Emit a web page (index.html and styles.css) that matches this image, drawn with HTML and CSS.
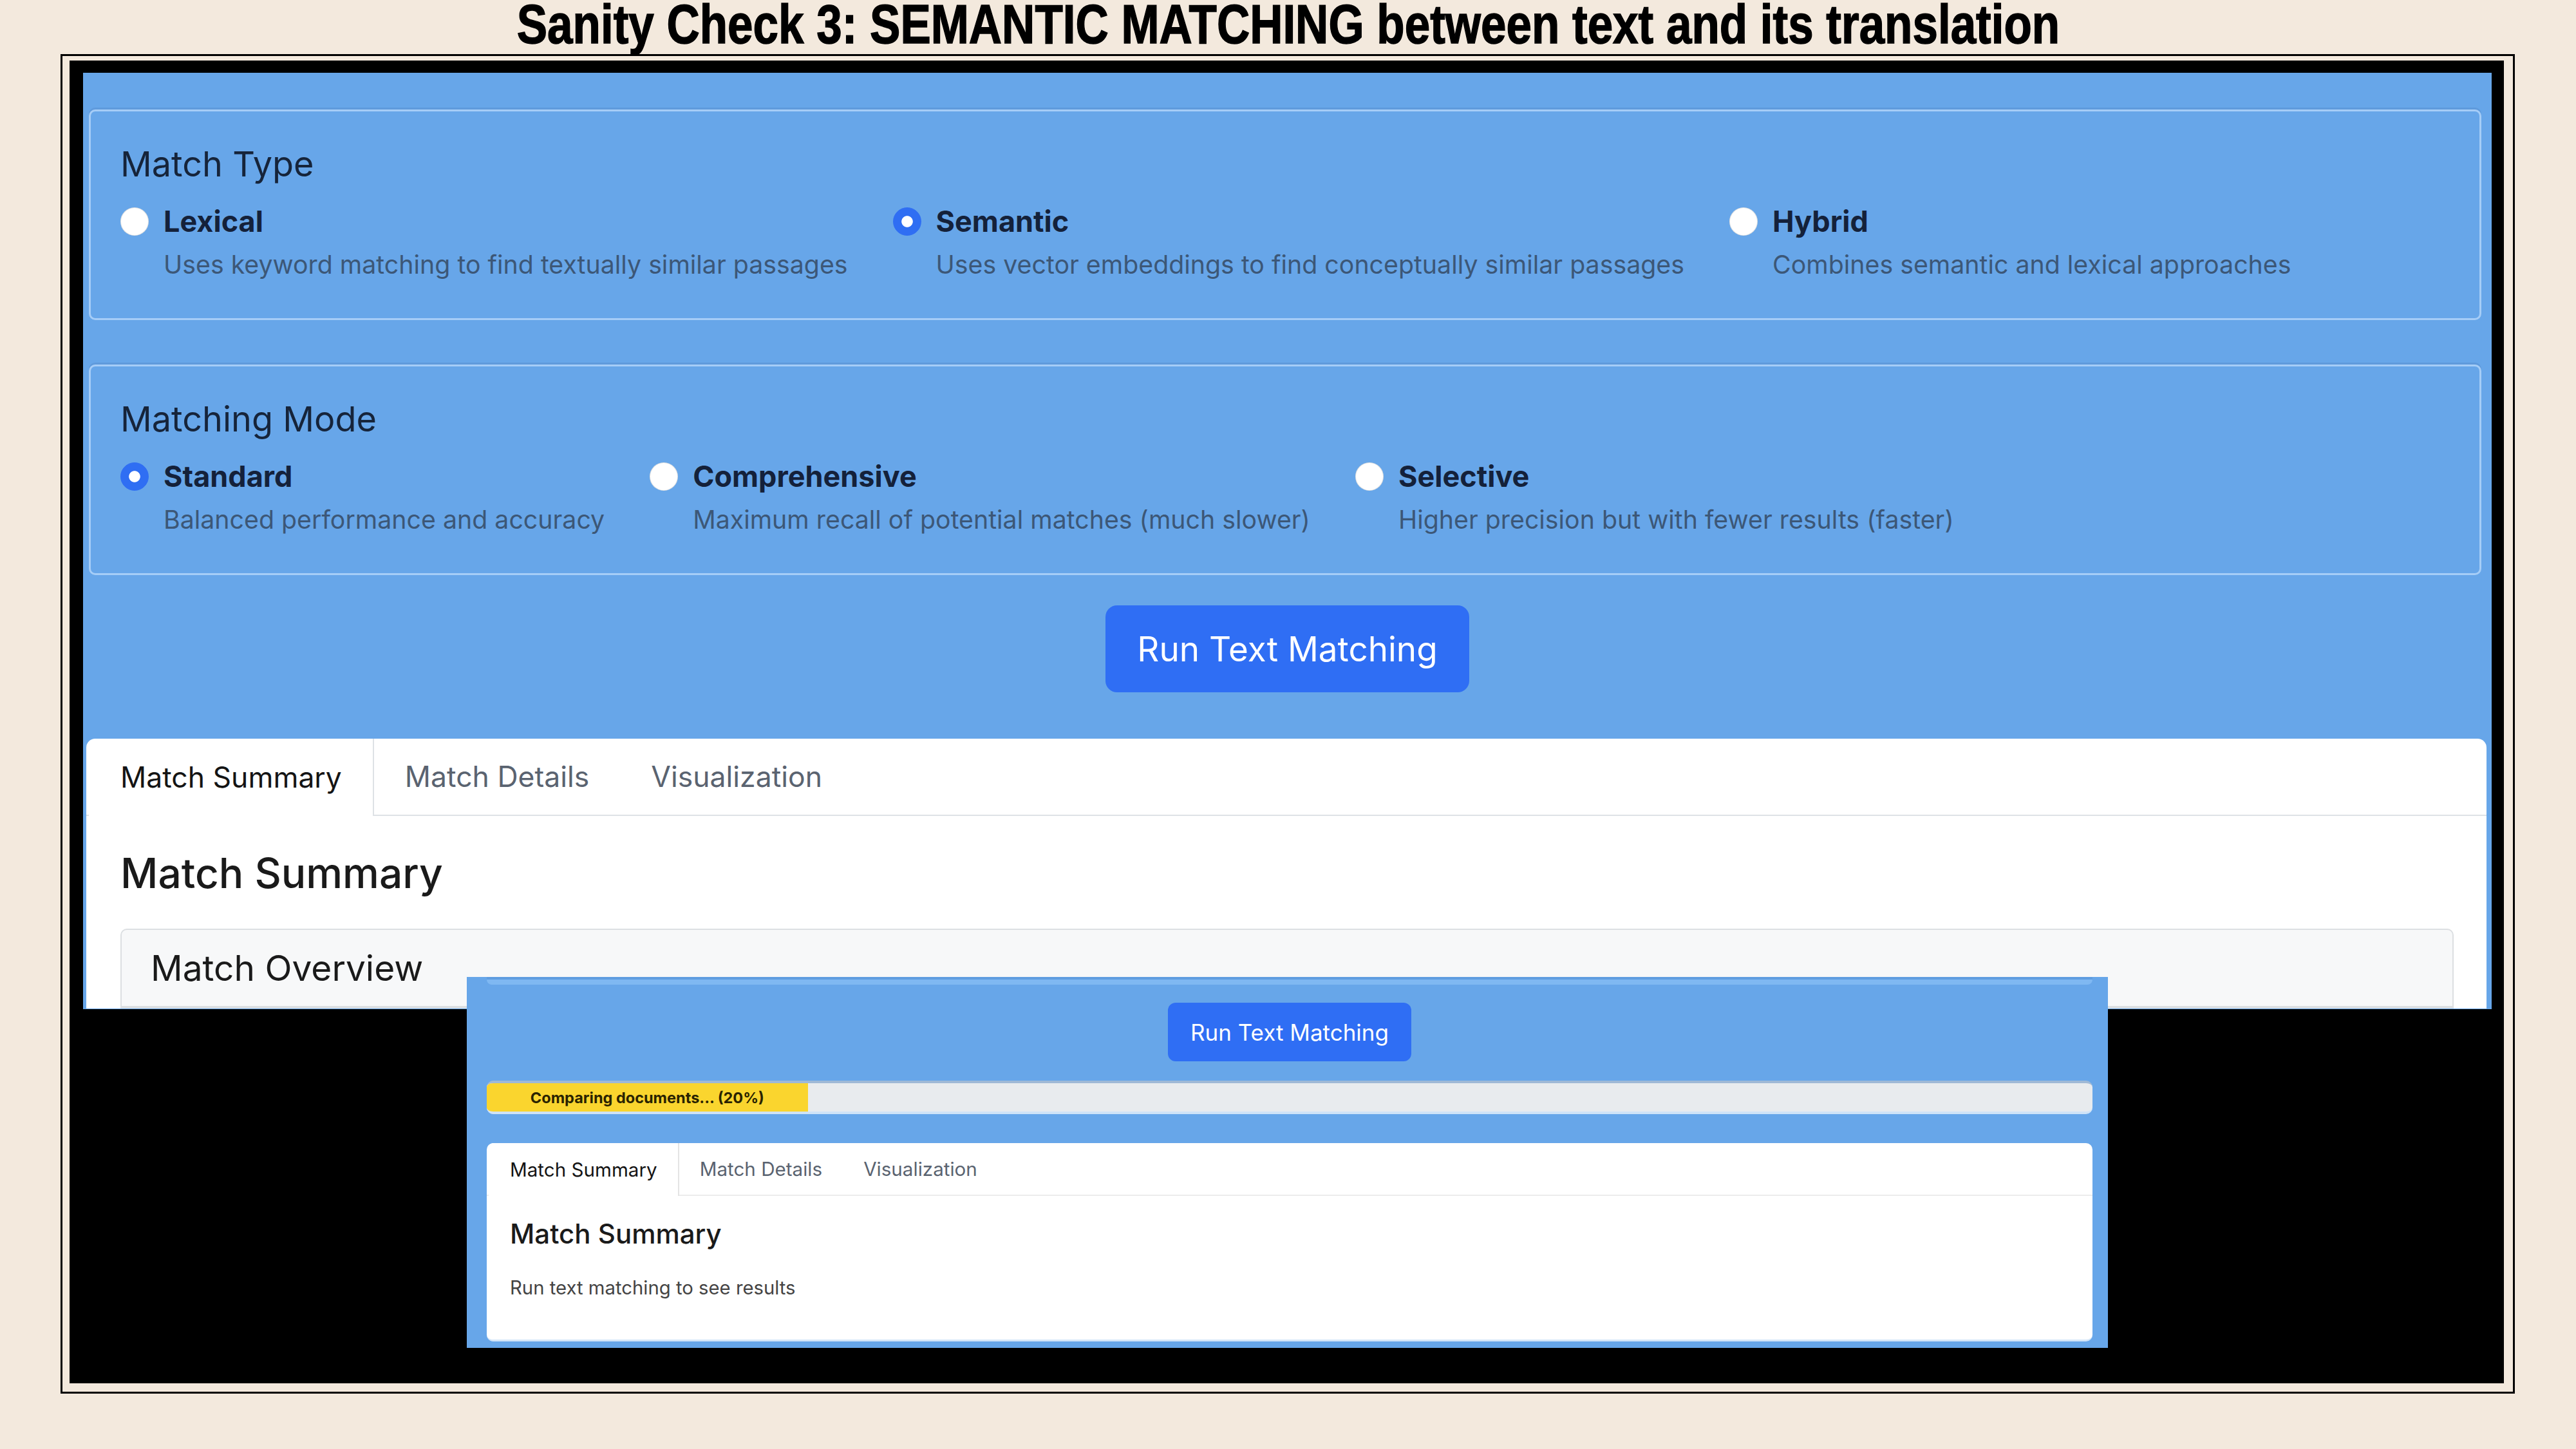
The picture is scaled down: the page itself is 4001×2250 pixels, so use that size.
FILE: index.html
```html
<!DOCTYPE html>
<html lang="en">
<head>
<meta charset="utf-8">
<title>Sanity Check 3</title>
<link rel="stylesheet" href="styles.css">
</head>
<body>
<header class="slide-title"><h1>Sanity Check 3: SEMANTIC MATCHING between text and its translation</h1></header>
<div class="frame">
  <div class="stage">
    <section class="shot">
      <div class="card">
        <h3 class="card-title">Match Type</h3>
        <div class="options">
          <div class="option"><span class="radio"></span><span class="opt-label">Lexical</span><span class="opt-desc">Uses keyword matching to find textually similar passages</span></div>
          <div class="option"><span class="radio checked"></span><span class="opt-label">Semantic</span><span class="opt-desc">Uses vector embeddings to find conceptually similar passages</span></div>
          <div class="option"><span class="radio"></span><span class="opt-label">Hybrid</span><span class="opt-desc">Combines semantic and lexical approaches</span></div>
        </div>
      </div>
      <div class="card">
        <h3 class="card-title">Matching Mode</h3>
        <div class="options">
          <div class="option"><span class="radio checked"></span><span class="opt-label">Standard</span><span class="opt-desc">Balanced performance and accuracy</span></div>
          <div class="option"><span class="radio"></span><span class="opt-label">Comprehensive</span><span class="opt-desc">Maximum recall of potential matches (much slower)</span></div>
          <div class="option"><span class="radio"></span><span class="opt-label">Selective</span><span class="opt-desc">Higher precision but with fewer results (faster)</span></div>
        </div>
      </div>
      <div class="btn-row"><button class="run-btn">Run Text Matching</button></div>
      <div class="panel">
        <nav class="tabs">
          <span class="tab active">Match Summary</span>
          <span class="tab">Match Details</span>
          <span class="tab">Visualization</span>
        </nav>
        <div class="panel-body">
          <h2 class="summary-title">Match Summary</h2>
          <div class="overview"><div class="overview-head">Match Overview</div></div>
        </div>
      </div>
    </section>

    <section class="shot-small">
      <div class="strip"></div>
      <div class="btn-row"><button class="run-btn sm">Run Text Matching</button></div>
      <div class="progress"><div class="progress-fill" style="width:20%">Comparing documents... (20%)</div></div>
      <div class="panel sm">
        <nav class="tabs sm">
          <span class="tab active">Match Summary</span>
          <span class="tab">Match Details</span>
          <span class="tab">Visualization</span>
        </nav>
        <div class="panel-body sm">
          <h2 class="summary-title sm">Match Summary</h2>
          <p class="result-note">Run text matching to see results</p>
        </div>
      </div>
    </section>
  </div>
</div>
</body>
</html>
```

FILE: styles.css
```css
* { box-sizing: border-box; }
html, body { margin: 0; padding: 0; }
body {
  background: #f3e9dd;
  width: 4001px;
  height: 2250px;
  overflow: hidden;
  font-family: "Inter", "Liberation Sans", sans-serif;
}

.slide-title {
  height: 84px;
  display: flex;
  justify-content: center;
}
.slide-title h1 {
  margin: 0;
  font-family: "Liberation Sans", Arial, sans-serif;
  font-weight: 700;
  font-size: 85px;
  line-height: 76px;
  color: #000;
  white-space: nowrap;
  transform: scaleX(0.835);
  transform-origin: center top;
  -webkit-text-stroke: 1.5px #000;
}

.frame {
  margin-left: 94px;
  width: 3812px;
  height: 2080px;
  border: 3px solid #000;
  padding: 7px 14px 13px 11px;
}
.stage {
  position: relative;
  background: #000;
  height: 100%;
  padding: 19px 19px 0 21px;
}

/* main screenshot */
.shot {
  background: #67a6e9;
  height: 1454px;
  overflow: hidden;
  padding-top: 57px;
}
.card {
  margin: 0 16px 69px 9px;
  border: 3px solid #a6cdf7;
  border-radius: 10px;
  box-shadow: 0 -3px 0 rgba(60, 100, 160, 0.18);
  padding: 52px 46px 59px;
}
.card-title {
  margin: 0 0 31px;
  font-size: 54px;
  line-height: 60px;
  font-weight: 400;
  color: #16243a;
}
.options {
  display: flex;
  gap: 70px;
}
.option {
  display: grid;
  grid-template-columns: 44px auto;
  column-gap: 23px;
  row-gap: 15px;
  align-items: center;
}
.radio {
  width: 44px;
  height: 44px;
  border-radius: 50%;
  background: #fff;
  border: 1px solid rgba(0, 0, 0, 0.12);
}
.radio.checked {
  background: radial-gradient(circle, #ffffff 0 28%, #2f6ef3 31%);
  border-color: #2f6ef3;
}
.opt-label {
  font-size: 45px;
  line-height: 56px;
  font-weight: 700;
  color: #14213a;
}
.opt-desc {
  grid-column: 2;
  font-size: 39.3px;
  line-height: 48px;
  color: #3c5777;
  white-space: nowrap;
}

.btn-row {
  display: flex;
  justify-content: center;
}
.run-btn {
  width: 565px;
  height: 135px;
  margin: -22px 0 72px;
  border: 0;
  border-radius: 18px;
  background: #2f6ef4;
  color: #fff;
  font-family: "Inter", "Liberation Sans", sans-serif;
  font-size: 53px;
  font-weight: 400;
  padding: 0;
}

.panel {
  margin: 0 8px 0 5px;
  background: #fff;
  border-radius: 14px 14px 0 0;
}
.tabs {
  display: flex;
  height: 120px;
  padding-left: 4px;
  border-bottom: 2px solid #dee2e6;
}
.tab {
  display: flex;
  align-items: center;
  padding: 0 48px;
  font-size: 44.5px;
  color: #5a6370;
  white-space: nowrap;
}
.tab.active {
  color: #141414;
  background: #fff;
  border-right: 2px solid #dee2e6;
  margin-bottom: -2px;
  border-radius: 12px 0 0 0;
  padding-left: 49px;
}
.panel-body {
  padding: 51px 51px 0 53px;
}
.summary-title {
  margin: 0 0 48px;
  font-size: 64px;
  line-height: 76px;
  font-weight: 500;
  color: #1a1a1a;
}
.overview {
  background: #f7f8f9;
  border: 2px solid #dcdfe2;
  border-radius: 10px 10px 0 0;
}
.overview-head {
  height: 120px;
  display: flex;
  align-items: center;
  padding-left: 45px;
  font-size: 55px;
  color: #1a1a1a;
  border-bottom: 2px solid #dcdfe2;
}

/* overlaid smaller screenshot */
.shot-small {
  position: absolute;
  left: 617px;
  top: 1423px;
  width: 2549px;
  height: 576px;
  background: #67a6e9;
  padding: 0 24px 0 31px;
}
.strip {
  height: 12px;
  border-bottom: 8px solid #7fb8f2;
  border-radius: 0 0 8px 8px;
  box-shadow: inset 0 4px 0 #5f9de0;
}
.run-btn.sm {
  width: 378px;
  height: 91px;
  margin: 28px 0 30px;
  border-radius: 12px;
  font-size: 35px;
}
.progress {
  height: 52px;
  background: #e8ebee;
  border-radius: 10px;
  border-top: 4px solid #9fb9d6;
  border-bottom: 4px solid #cfe3f8;
  overflow: hidden;
  display: flex;
}
.progress-fill {
  background: #fad52e;
  display: flex;
  align-items: center;
  justify-content: center;
  font-size: 23.5px;
  font-weight: 700;
  color: #2a2300;
  white-space: nowrap;
}
.panel.sm {
  margin: 45px 0 0;
  height: 308px;
  border-radius: 10px;
  border-bottom: 3px solid #d4e5f8;
}
.tabs.sm {
  height: 82px;
  padding-left: 3px;
  border-bottom: 2px solid #ececec;
}
.tabs.sm .tab {
  padding: 0 32px;
  font-size: 29.6px;
}
.tabs.sm .tab.active {
  border-right: 2px solid #e4e4e4;
  border-radius: 8px 0 0 0;
  padding-left: 33px;
}
.panel-body.sm {
  padding: 34px 36px 0;
}
.summary-title.sm {
  margin: 0 0 41px;
  font-size: 42px;
  line-height: 50px;
  font-weight: 500;
}
.result-note {
  margin: 0;
  font-size: 29.3px;
  line-height: 36px;
  color: #444;
}
```
